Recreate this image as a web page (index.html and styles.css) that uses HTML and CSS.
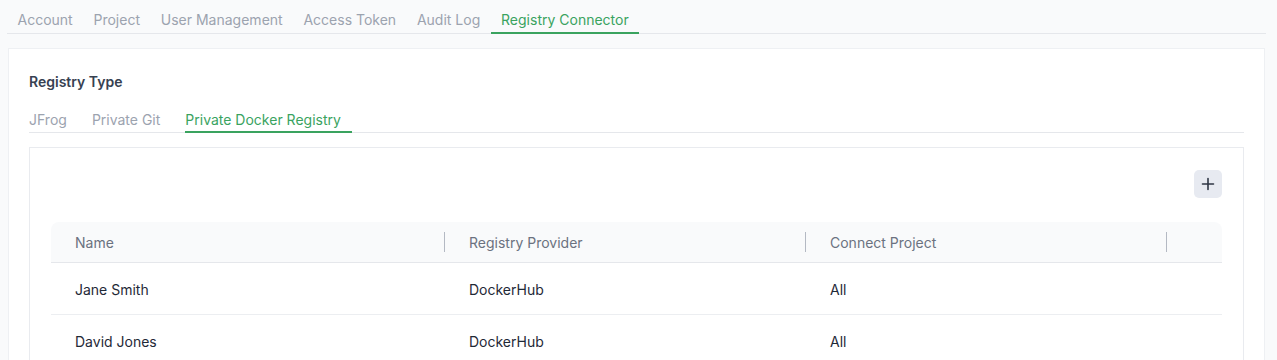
FILE: index.html
```html
<!DOCTYPE html>
<html lang="en">
<head>
    <meta charset="UTF-8">
    <meta name="viewport" content="width=device-width, initial-scale=1.0">
    <title>Settings - Registry Connector</title>
    <link rel="stylesheet" href="styles.css">
</head>
<body>
    <div class="page">
        <!-- Hoofdtabs -->
        <nav class="main-tabs">
            <a class="main-tab">Account</a>
            <a class="main-tab">Project</a>
            <a class="main-tab">User Management</a>
            <a class="main-tab">Access Token</a>
            <a class="main-tab">Audit Log</a>
            <a class="main-tab active">Registry Connector</a>
        </nav>

        <div class="card">
            <div class="section-title">Registry Type</div>
            <nav class="sub-tabs">
                <a class="sub-tab">JFrog</a>
                <a class="sub-tab">Private Git</a>
                <a class="sub-tab active">Private Docker Registry</a>
            </nav>

            <div class="inner-card">
                <div class="toolbar">
                    <button class="add-button" title="Add">
                        <svg width="14" height="14" viewBox="0 0 14 14">
                            <path d="M7 1.5v11M1.5 7h11" stroke="#2f3644" stroke-width="1.6" stroke-linecap="round"/>
                        </svg>
                    </button>
                </div>
                <table class="registry-table">
                    <colgroup>
                        <col style="width: 394px">
                        <col style="width: 361px">
                        <col style="width: 361px">
                        <col>
                    </colgroup>
                    <thead>
                        <tr>
                            <th>Name</th>
                            <th>Registry Provider</th>
                            <th>Connect Project</th>
                            <th class="last"></th>
                        </tr>
                    </thead>
                    <tbody>
                        <tr>
                            <td>Jane Smith</td>
                            <td>DockerHub</td>
                            <td>All</td>
                            <td></td>
                        </tr>
                        <tr>
                            <td>David Jones</td>
                            <td>DockerHub</td>
                            <td>All</td>
                            <td></td>
                        </tr>
                    </tbody>
                </table>
            </div>
        </div>
    </div>
</body>
</html>
```

FILE: styles.css
```css
body {
    margin: 0;
    font-family: 'Inter', 'Liberation Sans', sans-serif;
    font-size: 14px;
    line-height: 20px;
    background-color: #f9fafb;
    color: #1f2937;
}
.page {
    padding: 0 11px 0 7px;
}
.main-tabs {
    display: flex;
    border-bottom: 1px solid #e5e7eb;
}
.main-tab {
    padding: 10px 10.3px 2px 10.5px;
    border-bottom: 2px solid transparent;
    margin-bottom: -1px;
    color: #9ca3af;
    cursor: pointer;
}
.main-tab.active {
    color: #3aa35f;
    border-bottom-color: #3aa35f;
}
.card {
    margin: 14px 1px 0;
    background-color: #ffffff;
    border: 1px solid #eef0f3;
    border-bottom: none;
    padding: 23px 20px 0;
}
.section-title {
    font-weight: 600;
    color: #374151;
    margin-bottom: 18px;
}
.sub-tabs {
    display: flex;
    border-bottom: 1px solid #e5e7eb;
}
.sub-tab {
    padding: 0 11px 1px 0;
    margin-right: 14px;
    border-bottom: 2px solid transparent;
    margin-bottom: -1px;
    color: #9ca3af;
    cursor: pointer;
}
.sub-tab.active {
    color: #3aa35f;
    border-bottom-color: #3aa35f;
}
.inner-card {
    margin-top: 14px;
    border: 1px solid #e9ebef;
    border-bottom: none;
    padding: 22px 21px 0;
}
.toolbar {
    display: flex;
    justify-content: flex-end;
    margin-bottom: 24px;
}
.add-button {
    width: 28px;
    height: 28px;
    border: none;
    border-radius: 5px;
    background-color: #e7eaf1;
    display: flex;
    align-items: center;
    justify-content: center;
    padding: 0;
    cursor: pointer;
}
.registry-table {
    width: 100%;
    table-layout: fixed;
    border-collapse: separate;
    border-spacing: 0;
}
.registry-table th {
    position: relative;
    height: 38px;
    padding: 2px 24px 0;
    text-align: left;
    font-weight: 400;
    color: #6b7280;
    background-color: #f9fafb;
    border-bottom: 1px solid #e5e7eb;
}
.registry-table th:first-child {
    border-top-left-radius: 8px;
}
.registry-table th:last-child {
    border-top-right-radius: 8px;
}
/* Scheidingslijn tussen kolomkoppen */
.registry-table th:not(.last)::after {
    content: '';
    position: absolute;
    right: 0;
    top: 10px;
    width: 1px;
    height: 20px;
    background-color: #b4b9c3;
}
.registry-table td {
    height: 49px;
    padding: 2px 24px 0;
    color: #1f2937;
    border-bottom: 1px solid #eceef1;
}
```
